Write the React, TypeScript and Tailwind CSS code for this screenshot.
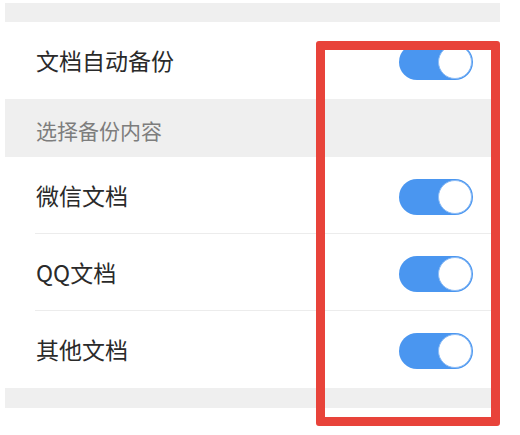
import React from "react";

function Toggle() {
  return (
    <div className="relative w-[74px] h-[36px] rounded-full bg-[#4a96f0] shrink-0">
      <div className="absolute right-[1px] top-[1px] w-[34px] h-[34px] rounded-full bg-white border border-[#8dbcf5]" />
    </div>
  );
}

function Row({ label, divider }: { label: string; divider?: boolean }) {
  return (
    <div className="h-[77px] flex items-center relative">
      <span className="pl-[31px] text-[23px] text-[#2a2a2a] leading-none">{label}</span>
      <div className="ml-auto pr-[27px] pt-[2px]">
        <Toggle />
      </div>
      {divider && <div className="absolute left-[30px] right-0 bottom-0 h-px bg-[#ececec]" />}
    </div>
  );
}

export default function App() {
  return (
    <div
      className="relative w-[520px] h-[435px] bg-white overflow-hidden"
      style={{ fontFamily: '"Noto Sans CJK SC", "Noto Sans", sans-serif' }}
    >
      <div className="ml-[5px] w-[495px] pt-[3px] flex flex-col">
        <div className="h-[19px] bg-[#efefef]" />
        <Row label="文档自动备份" />
        <div className="h-[58px] bg-[#efefef] flex items-center">
          <span className="pl-[31px] pt-[4px] text-[21px] text-[#7d7d7d] leading-none">选择备份内容</span>
        </div>
        <Row label="微信文档" divider />
        <Row label="QQ文档" divider />
        <Row label="其他文档" />
        <div className="h-[20px] bg-[#efefef]" />
      </div>
      <div className="absolute left-[316px] top-[41px] w-[184px] h-[385px] border-[9px] border-[#e8433a] rounded-[3px]" />
    </div>
  );
}
